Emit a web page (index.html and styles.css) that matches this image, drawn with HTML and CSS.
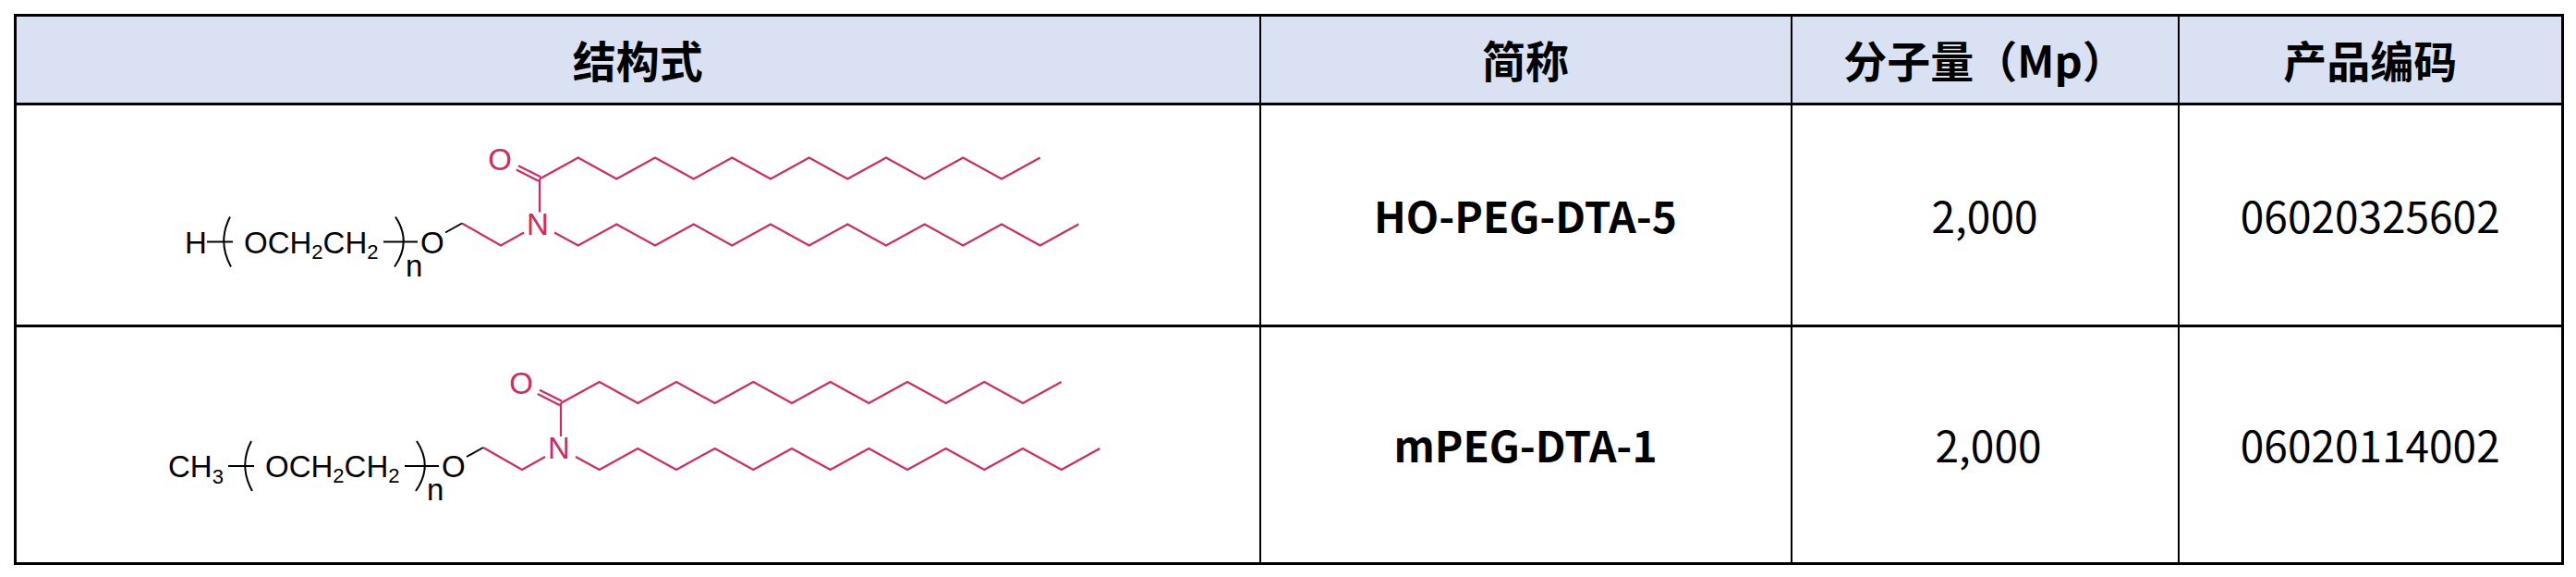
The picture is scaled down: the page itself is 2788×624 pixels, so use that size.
FILE: index.html
```html
<!DOCTYPE html>
<html lang="zh-CN">
<head>
<meta charset="utf-8">
<title>PEG-DTA</title>
<link rel="stylesheet" href="styles.css">
</head>
<body>
<table class="spec">
  <colgroup>
    <col class="c-struct">
    <col class="c-name">
    <col class="c-mw">
    <col class="c-code">
  </colgroup>
  <thead>
    <tr class="head">
      <th>结构式</th>
      <th>简称</th>
      <th>分子量（Mp）</th>
      <th>产品编码</th>
    </tr>
  </thead>
  <tbody>
    <tr class="row1">
      <td class="struct">
        <svg class="mol" viewBox="168 141.5 1040 180" xmlns="http://www.w3.org/2000/svg">
          <text x="198" y="272">H</text>
          <line class="bond" x1="222" y1="260" x2="250" y2="260"/>
          <g>
            <path class="bond" d="M247,233 Q233,260 248,287"/>
            <text x="262" y="272">OCH<tspan class="sub" dy="6">2</tspan><tspan dy="-6">CH</tspan><tspan class="sub" dy="6">2</tspan></text>
            <line class="bond" x1="413" y1="260" x2="450" y2="260"/>
            <path class="bond" d="M426,233 Q444,260 425,287"/>
            <text x="437" y="297">n</text>
            <text x="453" y="272">O</text>
            <line class="bond" x1="480" y1="250" x2="498" y2="240"/>
            <polyline class="amide" points="498,240 540,264 565,250"/>
            <text class="amide-text" x="580" y="252" text-anchor="middle">N</text>
            <line class="amide" x1="582" y1="228" x2="582" y2="192"/>
            <text class="amide-text" x="539" y="182" text-anchor="middle">O</text>
            <line class="amide" x1="583.1" y1="189.8" x2="559" y2="177.7"/>
            <line class="amide" x1="580.9" y1="194.2" x2="556.8" y2="182.1"/>
            <polyline class="amide" points="582,192 623.7,169 665.3,192 707,169 748.7,192 790.3,169 832,192 873.7,169 915.3,192 957,169 998.7,192 1040.3,169 1082,192 1123.7,169"/>
            <polyline class="amide" points="598,250 623.7,264 665.3,241 707,264 748.7,241 790.3,264 832,241 873.7,264 915.3,241 957,264 998.7,241 1040.3,264 1082,241 1123.7,264 1165.3,241"/>
          </g>
        </svg>
      </td>
      <td class="name">HO-PEG-DTA-5</td>
      <td>2,000</td>
      <td>06020325602</td>
    </tr>
    <tr class="row2">
      <td class="struct">
        <svg class="mol" viewBox="168 390 1040 180" xmlns="http://www.w3.org/2000/svg">
          <text x="180" y="515">CH<tspan class="sub" dy="7">3</tspan></text>
          <line class="bond" x1="245" y1="503" x2="273" y2="503"/>
          <g transform="translate(23,243)">
            <path class="bond" d="M247,233 Q233,260 248,287"/>
            <text x="262" y="272">OCH<tspan class="sub" dy="6">2</tspan><tspan dy="-6">CH</tspan><tspan class="sub" dy="6">2</tspan></text>
            <line class="bond" x1="413" y1="260" x2="450" y2="260"/>
            <path class="bond" d="M426,233 Q444,260 425,287"/>
            <text x="437" y="297">n</text>
            <text x="453" y="272">O</text>
            <line class="bond" x1="480" y1="250" x2="498" y2="240"/>
            <polyline class="amide" points="498,240 540,264 565,250"/>
            <text class="amide-text" x="580" y="252" text-anchor="middle">N</text>
            <line class="amide" x1="582" y1="228" x2="582" y2="192"/>
            <text class="amide-text" x="539" y="182" text-anchor="middle">O</text>
            <line class="amide" x1="583.1" y1="189.8" x2="559" y2="177.7"/>
            <line class="amide" x1="580.9" y1="194.2" x2="556.8" y2="182.1"/>
            <polyline class="amide" points="582,192 623.7,169 665.3,192 707,169 748.7,192 790.3,169 832,192 873.7,169 915.3,192 957,169 998.7,192 1040.3,169 1082,192 1123.7,169"/>
            <polyline class="amide" points="598,250 623.7,264 665.3,241 707,264 748.7,241 790.3,264 832,241 873.7,264 915.3,241 957,264 998.7,241 1040.3,264 1082,241 1123.7,264 1165.3,241"/>
          </g>
        </svg>
      </td>
      <td class="name">mPEG-DTA-1</td>
      <td class="mw-shift">2,000</td>
      <td>06020114002</td>
    </tr>
  </tbody>
</table>
</body>
</html>
```

FILE: styles.css
```css
* {
  box-sizing: border-box;
}

html, body {
  margin: 0;
  padding: 0;
  background: #ffffff;
}

body {
  font-family: "Noto Sans CJK SC", "Noto Sans", sans-serif;
  color: #000000;
}

.spec {
  border-collapse: collapse;
  table-layout: fixed;
  width: 2757px;
  margin: 15px 0 0 15px;
  border: 3px solid #000000;
}

.c-struct { width: 1347px; }
.c-name { width: 575px; }
.c-mw { width: 419px; }
.c-code { width: 416px; }

.spec th,
.spec td {
  border-left: 2px solid #000000;
  border-right: 2px solid #000000;
  border-top: 3px solid #000000;
  border-bottom: 3px solid #000000;
  padding: 0;
  text-align: center;
  vertical-align: middle;
  line-height: 1.2;
}

.spec th {
  background: #d9e1f2;
  font-size: 47px;
  font-weight: 700;
}

.head { height: 96px; }
.row1 { height: 240px; }
.row2 { height: 257px; }

.spec td {
  font-size: 46px;
  font-weight: 400;
}

.spec td.name {
  font-weight: 700;
}

.spec td.mw-shift {
  padding-left: 8px;
}

.mol {
  display: block;
  width: 1040px;
  height: 180px;
  margin: 0 auto;
}

.mol text {
  font-family: "Liberation Sans", Arial, sans-serif;
  font-size: 33px;
  fill: #000000;
}

.mol .sub {
  font-size: 22px;
}

.mol text.amide-text {
  fill: #d02a60;
}

.bond {
  stroke: #000000;
  stroke-width: 2;
  fill: none;
}

.amide {
  stroke: #d02a60;
  stroke-width: 2.2;
  fill: none;
  stroke-linejoin: miter;
}
```
